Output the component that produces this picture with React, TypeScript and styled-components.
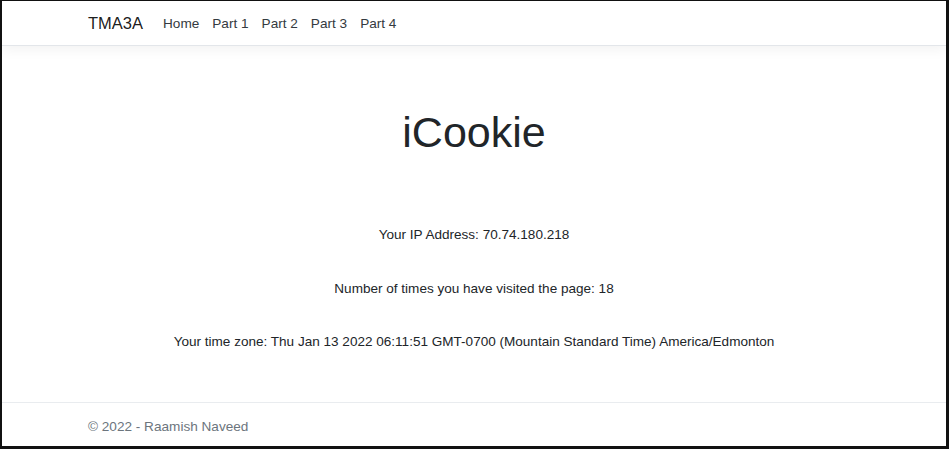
import React from 'react';
import styled, { createGlobalStyle } from 'styled-components';

const GlobalStyle = createGlobalStyle`
    html, body {
        margin: 0;
        padding: 0;
        background: #ffffff;
    }
    body {
        font-family: "Liberation Sans", Arial, sans-serif;
        color: #212529;
    }
`;

const Frame = styled.div`
    box-sizing: border-box;
    width: 949px;
    height: 449px;
    border-style: solid;
    border-color: #111111;
    border-width: 1px 3px 3px 2px;
    overflow: hidden;
    display: flex;
    flex-direction: column;
    background: #ffffff;
`;

const Navbar = styled.header`
    flex: 0 0 auto;
    height: 44px;
    display: flex;
    align-items: center;
    padding: 0 86px;
    border-bottom: 1px solid #e3e6ea;
    box-shadow: 0 4px 12px rgba(0, 0, 0, 0.05);
    position: relative;
    z-index: 1;
`;

const Brand = styled.a`
    font-size: 16.5px;
    color: rgba(0, 0, 0, 0.9);
    text-decoration: none;
    margin-right: 20px;
`;

const NavList = styled.nav`
    display: flex;
    gap: 13px;
`;

const NavLink = styled.a`
    font-size: 13.6px;
    color: #343a40;
    text-decoration: none;
`;

const Main = styled.main`
    flex: 1 1 auto;
    display: flex;
    flex-direction: column;
    align-items: center;
    padding-top: 60px;
`;

const Title = styled.h1`
    margin: 0 0 66px;
    font-size: 43px;
    font-weight: 300;
    line-height: 52px;
    color: #212529;
`;

const Info = styled.p<{ $last?: boolean }>`
    margin: 0 0 ${p => (p.$last ? 0 : 32.5)}px;
    font-size: 13.55px;
    line-height: 21px;
    color: #212529;
`;

const Footer = styled.footer`
    flex: 0 0 43px;
    height: 43px;
    overflow: hidden;
    line-height: 48px;
    padding: 0 86px;
    border-top: 1px solid #e9ecef;
    font-size: 13.6px;
    color: #6c757d;
`;

const links = ['Home', 'Part 1', 'Part 2', 'Part 3', 'Part 4'];

export default function App() {
    return (
        <>
            <GlobalStyle />
            <Frame>
                <Navbar>
                    <Brand href="#">TMA3A</Brand>
                    <NavList>
                        {links.map(l => (
                            <NavLink key={l} href="#">{l}</NavLink>
                        ))}
                    </NavList>
                </Navbar>
                <Main>
                    <Title>iCookie</Title>
                    <Info>Your IP Address: 70.74.180.218</Info>
                    <Info>Number of times you have visited the page: 18</Info>
                    <Info $last>
                        Your time zone: Thu Jan 13 2022 06:11:51 GMT-0700 (Mountain Standard Time) America/Edmonton
                    </Info>
                </Main>
                <Footer>© 2022 - Raamish Naveed</Footer>
            </Frame>
        </>
    );
}
